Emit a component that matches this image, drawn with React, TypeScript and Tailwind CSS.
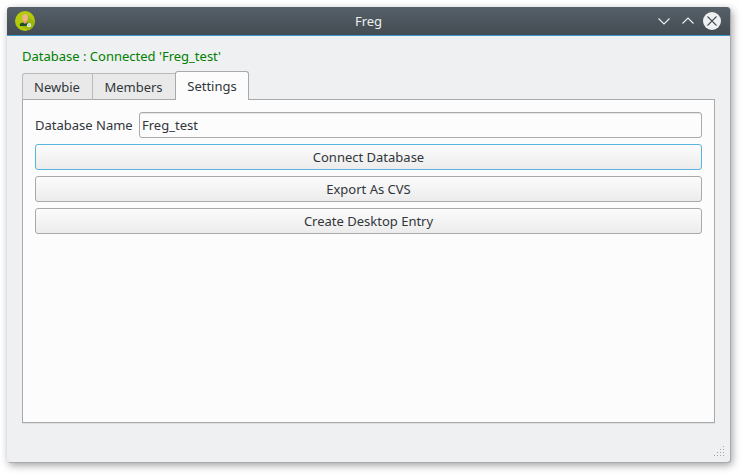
import React from "react";

const gripDots = [
  [9, 0],
  [6, 3], [9, 3],
  [3, 6], [6, 6], [9, 6],
  [0, 9], [3, 9], [6, 9], [9, 9],
];

function AppIcon() {
  return (
    <svg width="20" height="20" viewBox="0 0 20 20" className="block">
      <circle cx="10" cy="10" r="10" fill="#b4cb0c" />
      <path d="M12.5 4 L19.4 10.5 A10 10 0 0 1 14 19.2 L5 15 L9 10Z" fill="#9db60a" />
      <path d="M4.8 15 V13.8 C4.8 12 7.5 11.6 10 11.6 S15.2 12 15.2 13.8 V15Z" fill="#1f4d22" />
      <path d="M8.4 8 H11.8 V12 L10.1 12.8 L8.4 12Z" fill="#e3a17c" />
      <rect x="7.3" y="3.2" width="5.6" height="6.8" rx="2.5" fill="#f0b48c" />
      <circle cx="14" cy="14.2" r="2.1" fill="#e8f0e0" />
      <circle cx="14" cy="14.2" r="0.7" fill="#88a878" />
    </svg>
  );
}

function TitleBar() {
  return (
    <header className="grid h-[29px] grid-cols-[1fr_auto_1fr] items-center rounded-t-[3px] border-b border-[#3f9bcd] bg-linear-to-b from-[#566068] to-[#434c53] pr-[9px] pl-2">
      <AppIcon />
      <h1 className="pl-px text-[13px] leading-[18px] text-[#eff0f1]">Freg</h1>
      <div className="flex items-center justify-end">
        <svg width="64" height="20" viewBox="0 0 64 20" fill="none" className="block">
          <path d="M1.5 7.5 L7 13 L12.5 7.5" stroke="#eff0f1" strokeWidth="1.1" />
          <path d="M25.5 12.5 L31 7 L36.5 12.5" stroke="#eff0f1" strokeWidth="1.1" />
          <circle cx="55" cy="10" r="9" fill="#eff0f1" />
          <path d="M50.5 5.5 L59.5 14.5 M59.5 5.5 L50.5 14.5" stroke="#475057" strokeWidth="1.1" />
        </svg>
      </div>
    </header>
  );
}

function PushButton({ label, focused = false }: { label: string; focused?: boolean }) {
  return (
    <button
      className={`block h-[26px] w-full rounded-[3px] border bg-linear-to-b from-[#fcfcfc] to-[#ececec] text-center leading-6 ${
        focused ? "border-[#5bb3e0]" : "border-[#a8a9aa]"
      }`}
    >
      {label}
    </button>
  );
}

export default function App() {
  return (
    <div className="h-[475px] w-[743px] overflow-hidden bg-white pt-[7px] pl-[7px] font-['Noto_Sans',sans-serif] text-[13px] text-[#31363b]">
      <main className="flex h-[455px] w-[723px] flex-col rounded-[3px] bg-[#eff0f1] shadow-[1px_1px_0_#a9abac,2px_3px_8px_rgba(0,0,0,0.4)]">
        <TitleBar />
        <div className="flex grow flex-col px-[15px] pt-[11px]">
          <p className="h-[24px] leading-[19px] text-[#008000]">Database : Connected 'Freg_test'</p>
          <nav className="z-10 -mb-px flex h-[29px] items-end leading-[18px]">
            <button className="h-[27px] w-[71px] rounded-tl-[3px] border border-[#b9babb] border-b-[#a8a9aa] bg-[#e9e9e9] pt-px pr-px">Newbie</button>
            <button className="-ml-px h-[27px] w-[84px] border border-r-0 border-[#b9babb] border-b-[#a8a9aa] bg-[#e9e9e9] pt-px pr-0.5">Members</button>
            <button className="-ml-px h-[29px] w-[74px] rounded-t-[3px] border border-b-0 border-[#a8a9aa] bg-[#fcfcfc]">Settings</button>
          </nav>
          <section className="flex h-[324px] flex-col gap-1.5 border border-[#a8a9aa] bg-[#fcfcfc] p-3 shadow-[0_1px_0_#dfe0e1]">
            <label className="flex h-[26px] items-center">
              <span className="w-[104px] shrink-0 pt-px leading-[19px]">Database Name</span>
              <input
                defaultValue="Freg_test"
                className="h-[26px] min-w-0 grow rounded-[3px] border border-[#a8a9aa] bg-[#fcfcfc] px-0.5 shadow-[inset_0_1px_0_#e6e6e6] outline-none"
              />
            </label>
            <PushButton label="Connect Database" focused />
            <PushButton label="Export As CVS" />
            <PushButton label="Create Desktop Entry" />
          </section>
          <footer className="-mr-[9px] flex grow items-end justify-end pb-1.5">
            <svg width="10" height="10" className="block" shapeRendering="crispEdges">
              {gripDots.map(([x, y]) => (
                <rect key={`${x}-${y}`} x={x} y={y} width="1" height="1" fill="#a3a5a6" />
              ))}
            </svg>
          </footer>
        </div>
      </main>
    </div>
  );
}
